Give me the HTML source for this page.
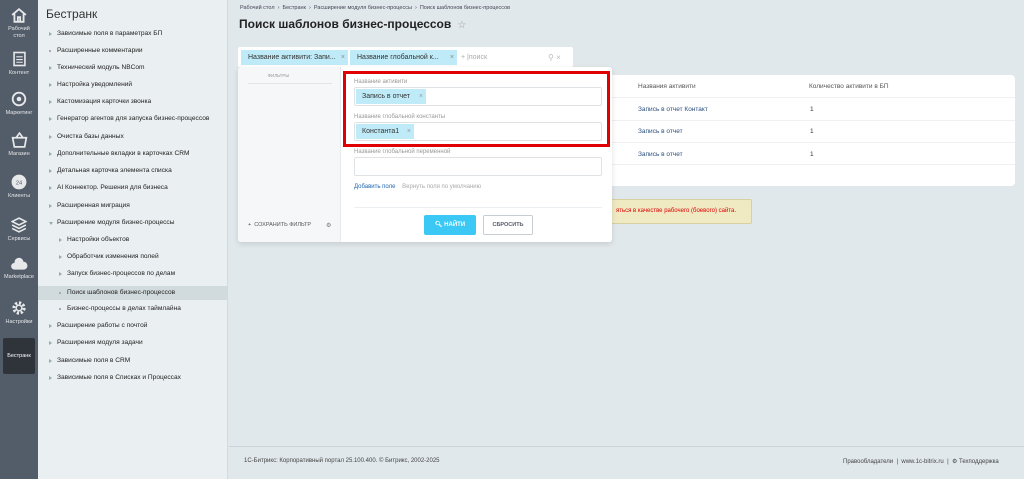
<!DOCTYPE html>
<html><head><meta charset="utf-8"><style>
*{box-sizing:border-box;margin:0;padding:0}
body{width:1024px;height:479px;overflow:hidden;background:#e1e8eb;font-family:"Liberation Sans",sans-serif;position:relative;font-size:7px;color:#333}
.abs{position:absolute}
#lb{left:0;top:0;width:38px;height:479px;background:#535c69}
.ic{position:absolute;left:0;width:38px;text-align:center;color:#e6e8ea;font-size:5.5px;line-height:7px}
.ic svg{display:block;margin:0 auto 3px}
#menu{left:38px;top:0;width:190px;height:479px;background:#eaeff1;border-right:1px solid #d3dade}
.mi{position:absolute;left:0;width:190px;height:14px;line-height:14px;font-size:6.6px;color:#222}
.mi:before{content:"";position:absolute;left:11px;top:5px;border-left:3px solid #9aa;border-top:2px solid transparent;border-bottom:2px solid transparent}
.mi span{position:absolute;left:19px}
.sub span{left:29px}.sub:before{left:21px}
.dot:before{border:0;width:2px;height:2px;background:#aab;top:6px}
.open:before{border-left:2px solid transparent;border-right:2px solid transparent;border-top:3px solid #9aa;border-bottom:0;top:6px}
</style></head><body>
<div id="lb" class="abs">
 <div class="ic" style="top:8px"><svg width="16" height="15" viewBox="0 0 14 13"><path d="M1 6L7 1l6 5M3 5v7h8V5M6 12V8h2v4" fill="none" stroke="#e6e8ea" stroke-width="1.6"/></svg>Рабочий<br>стол</div>
 <div class="ic" style="top:51px"><svg width="13" height="16" viewBox="0 0 12 14"><rect x="1" y="1" width="10" height="12" fill="none" stroke="#e6e8ea" stroke-width="1.5"/><path d="M3 5h6M3 7.5h6M3 10h6" stroke="#e6e8ea"/></svg>Контент</div>
 <div class="ic" style="top:91px"><svg width="16" height="16" viewBox="0 0 14 14"><circle cx="7" cy="7" r="5.5" fill="none" stroke="#e6e8ea" stroke-width="1.6"/><circle cx="7" cy="7" r="2" fill="#e6e8ea"/></svg>Маркетинг</div>
 <div class="ic" style="top:132px"><svg width="17" height="16" viewBox="0 0 14 14"><path d="M1 5h12l-1.5 8h-9z M4 5l3-4 3 4" fill="none" stroke="#e6e8ea" stroke-width="1.5"/></svg>Магазин</div>
 <div class="ic" style="top:174px"><svg width="16" height="16" viewBox="0 0 14 14"><circle cx="7" cy="7" r="6.5" fill="#e6e8ea"/><text x="7" y="9" font-size="5" text-anchor="middle" fill="#535c69">24</text></svg>Клиенты</div>
 <div class="ic" style="top:217px"><svg width="16" height="16" viewBox="0 0 14 14"><path d="M7 1l6 3-6 3-6-3z M1 7l6 3 6-3 M1 10l6 3 6-3" fill="none" stroke="#e6e8ea" stroke-width="1.4"/></svg>Сервисы</div>
 <div class="ic" style="top:257px"><svg width="18" height="14" viewBox="0 0 16 12"><path d="M4 11a3 3 0 010-6 4 4 0 018-1 3 3 0 010 7z" fill="#e6e8ea"/></svg>Marketplace</div>
 <div class="ic" style="top:300px"><svg width="16" height="16" viewBox="0 0 14 14"><circle cx="7" cy="7" r="4.5" fill="none" stroke="#e6e8ea" stroke-width="2.6" stroke-dasharray="2 1.5"/><circle cx="7" cy="7" r="2.5" fill="none" stroke="#e6e8ea" stroke-width="1.3"/></svg>Настройки</div>
 <div class="abs" style="left:3px;top:338px;width:32px;height:36px;background:#2f343b;border-radius:2px;color:#fff;font-size:5.5px;text-align:center;line-height:36px">Бестранк</div>
</div>
<div id="menu" class="abs">
 <div class="abs" style="left:8px;top:7px;font-size:12px;color:#333">Бестранк</div>
 <div class="mi" style="top:27px"><span>Зависимые поля в параметрах БП</span></div>
 <div class="mi dot" style="top:44px"><span>Расширенные комментарии</span></div>
 <div class="mi" style="top:61px"><span>Технический модуль NBCom</span></div>
 <div class="mi" style="top:78px"><span>Настройка уведомлений</span></div>
 <div class="mi" style="top:95px"><span>Кастомизация карточки звонка</span></div>
 <div class="mi" style="top:112px"><span>Генератор агентов для запуска бизнес-процессов</span></div>
 <div class="mi" style="top:130px"><span>Очистка базы данных</span></div>
 <div class="mi" style="top:147px"><span>Дополнительные вкладки в карточках CRM</span></div>
 <div class="mi" style="top:164px"><span>Детальная карточка элемента списка</span></div>
 <div class="mi" style="top:181px"><span>AI Коннектор. Решения для бизнеса</span></div>
 <div class="mi" style="top:199px"><span>Расширенная миграция</span></div>
 <div class="mi open" style="top:216px"><span>Расширение модуля бизнес-процессы</span></div>
 <div class="mi sub" style="top:233px"><span>Настройки объектов</span></div>
 <div class="mi sub" style="top:250px"><span>Обработчик изменения полей</span></div>
 <div class="mi sub" style="top:267px"><span>Запуск бизнес-процессов по делам</span></div>
 <div class="mi sub dot" style="top:286px;height:14px;background:#d1dadd"><span>Поиск шаблонов бизнес-процессов</span></div>
 <div class="mi sub dot" style="top:302px"><span>Бизнес-процессы в делах таймлайна</span></div>
 <div class="mi" style="top:319px"><span>Расширение работы с почтой</span></div>
 <div class="mi" style="top:336px"><span>Расширения модуля задачи</span></div>
 <div class="mi" style="top:354px"><span>Зависимые поля в CRM</span></div>
 <div class="mi" style="top:371px"><span>Зависимые поля в Списках и Процессах</span></div>
</div>
<div class="abs" style="left:240px;top:5px;font-size:5.5px;color:#445">Рабочий стол &nbsp;›&nbsp; Бестранк &nbsp;›&nbsp; Расширение модуля бизнес-процессы &nbsp;›&nbsp; Поиск шаблонов бизнес-процессов</div>
<div class="abs" style="left:239px;top:17px;font-size:12px;font-weight:bold;color:#222">Поиск шаблонов бизнес-процессов <span style="font-weight:normal;color:#999;font-size:10px">&nbsp;☆</span></div>
<div class="abs" style="left:590px;top:75px;width:425px;height:111px;background:#fff;border-radius:4px"></div>
<div class="abs" style="left:638px;top:83px;font-size:6.5px;color:#555">Названия активити</div>
<div class="abs" style="left:809px;top:83px;font-size:6.5px;color:#555">Количество активити в БП</div>
<div class="abs" style="left:612px;top:97px;width:403px;border-top:1px solid #eef0f1"></div>
<div class="abs" style="left:612px;top:120px;width:403px;border-top:1px solid #eef0f1"></div>
<div class="abs" style="left:612px;top:142px;width:403px;border-top:1px solid #eef0f1"></div>
<div class="abs" style="left:612px;top:164px;width:403px;border-top:1px solid #eef0f1"></div>
<div class="abs" style="left:638px;top:106px;font-size:6.5px;color:#2b4f7e">Запись в отчет Контакт</div>
<div class="abs" style="left:638px;top:128px;font-size:6.5px;color:#2b4f7e">Запись в отчет</div>
<div class="abs" style="left:638px;top:151px;font-size:6.5px;color:#2b4f7e">Запись в отчет</div>
<div class="abs" style="left:810px;top:106px;font-size:6.5px">1</div>
<div class="abs" style="left:810px;top:128px;font-size:6.5px">1</div>
<div class="abs" style="left:810px;top:151px;font-size:6.5px">1</div>
<div class="abs" style="left:595px;top:199px;width:157px;height:25px;background:#f0eac3;border:1px solid #d8d0a0;border-radius:2px;font-size:6px;color:#d00;line-height:23px;padding-left:20px">яться в качестве рабочего (боевого) сайта.</div>
<div class="abs" style="left:238px;top:47px;width:335px;height:20px;background:#fff;border-radius:2px"></div>
<div class="abs" style="left:241px;top:50px;width:107px;height:15px;background:#bfeaf7;font-size:7px;line-height:15px;padding-left:7px;color:#333">Название активити: Запи... <span style="position:absolute;right:3px;color:#888">×</span></div>
<div class="abs" style="left:350px;top:50px;width:107px;height:15px;background:#bfeaf7;font-size:7px;line-height:15px;padding-left:7px;color:#333">Название глобальной к... <span style="position:absolute;right:3px;color:#888">×</span></div>
<div class="abs" style="left:461px;top:50px;font-size:7px;line-height:15px;color:#aaa">+ |поиск</div>
<div class="abs" style="left:548px;top:50px;font-size:8px;line-height:15px;color:#bbb">⚲ ×</div>
<div class="abs" style="left:238px;top:67px;width:374px;height:175px;background:#fff;border-radius:3px;box-shadow:0 2px 6px rgba(0,0,0,.12)"></div>
<div class="abs" style="left:238px;top:67px;width:103px;height:175px;background:#f5f7f8;border-right:1px solid #e6eaec;border-radius:3px 0 0 3px"></div>
<div class="abs" style="left:255px;top:73px;width:47px;font-size:4.5px;color:#999;text-align:center">ФИЛЬТРЫ</div>
<div class="abs" style="left:248px;top:83px;width:84px;border-top:1px solid #e2e6e8"></div>
<div class="abs" style="left:248px;top:222px;font-size:5.5px;color:#555">+ &nbsp;СОХРАНИТЬ ФИЛЬТР</div>
<div class="abs" style="left:326px;top:222px;font-size:6px;color:#777">⚙</div>
<div class="abs" style="left:354px;top:79px;font-size:6px;color:#999">Название активити</div>
<div class="abs" style="left:354px;top:87px;width:248px;height:19px;border:1px solid #dfe3e6;border-radius:2px"></div>
<div class="abs" style="left:356px;top:89px;width:70px;height:15px;background:#bfeaf7;font-size:7px;line-height:15px;padding-left:6px">Запись в отчет <span style="color:#999;position:absolute;right:3px">×</span></div>
<div class="abs" style="left:354px;top:114px;font-size:6px;color:#999">Название глобальной константы</div>
<div class="abs" style="left:354px;top:122px;width:248px;height:19px;border:1px solid #dfe3e6;border-radius:2px"></div>
<div class="abs" style="left:356px;top:124px;width:58px;height:15px;background:#bfeaf7;font-size:7px;line-height:15px;padding-left:6px">Константа1 <span style="color:#999;position:absolute;right:3px">×</span></div>
<div class="abs" style="left:343px;top:71px;width:267px;height:76px;border:3px solid #e00000"></div>
<div class="abs" style="left:354px;top:149px;font-size:6px;color:#999">Название глобальной переменной</div>
<div class="abs" style="left:354px;top:157px;width:248px;height:19px;border:1px solid #dfe3e6;border-radius:2px"></div>
<div class="abs" style="left:354px;top:184px;font-size:6px;color:#2067b0">Добавить поле <span style="color:#aaa">&nbsp;&nbsp;&nbsp;Вернуть поля по умолчанию</span></div>
<div class="abs" style="left:354px;top:207px;width:248px;border-top:1px solid #eceff1"></div>
<div class="abs" style="left:424px;top:215px;width:52px;height:20px;background:#3bc8f5;border-radius:2px;color:#fff;font-size:6px;font-weight:bold;line-height:20px;text-align:center">🔍︎ НАЙТИ</div>
<div class="abs" style="left:483px;top:215px;width:50px;height:20px;background:#fff;border:1px solid #c6cdd3;border-radius:2px;color:#535c69;font-size:5.5px;font-weight:bold;line-height:18px;text-align:center">СБРОСИТЬ</div>
<div class="abs" style="left:229px;top:446px;width:795px;border-top:1px solid #c9d3d8"></div>
<div class="abs" style="left:244px;top:458px;font-size:6px;color:#444">1С-Битрикс: Корпоративный портал 25.100.400. © Битрикс, 2002-2025</div>
<div class="abs" style="left:843px;top:458px;font-size:6px;color:#444">Правообладатели &nbsp;| &nbsp;www.1c-bitrix.ru &nbsp;| &nbsp;⚙ Техподдержка</div>
</body></html>
